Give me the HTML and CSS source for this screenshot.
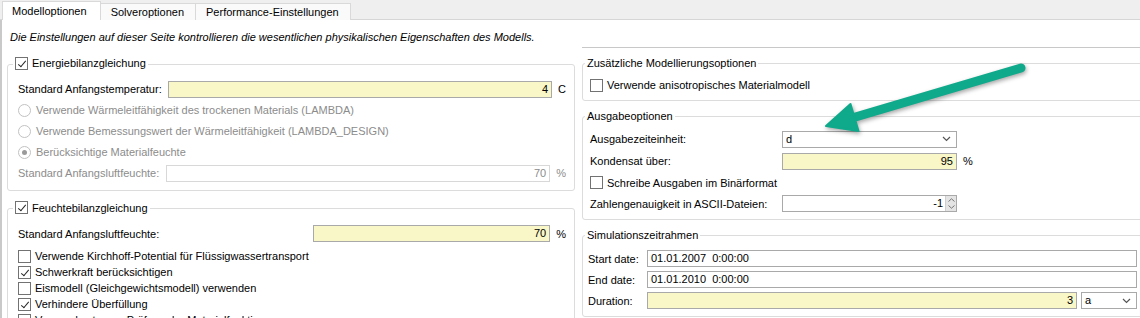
FILE: index.html
```html
<!DOCTYPE html>
<html lang="de">
<head>
    <meta charset="UTF-8">
    <title>Modelloptionen</title>
    <link rel="stylesheet" href="styles.css">
</head>
<body>
    <div class="window">
        <div class="tabbar">
            <div class="tab active">Modelloptionen</div>
            <div class="tab">Solveroptionen</div>
            <div class="tab">Performance-Einstellungen</div>
        </div>

        <div class="page">
            <p class="intro">Die Einstellungen auf dieser Seite kontrollieren die wesentlichen physikalischen Eigenschaften des Modells.</p>

            <div class="columns">
                <!-- linke Spalte -->
                <div class="col-left">
                    <fieldset class="group group-energy">
                        <legend><span class="legend-inner"><span class="check on"></span>Energiebilanzgleichung</span></legend>
                        <div class="row">
                            <span class="label">Standard Anfangstemperatur:</span>
                            <span class="field num yellow w-temp">4</span>
                            <span class="unit">C</span>
                        </div>
                        <div class="row disabled"><span class="radio"></span>Verwende Wärmeleitfähigkeit des trockenen Materials (LAMBDA)</div>
                        <div class="row disabled"><span class="radio"></span>Verwende Bemessungswert der Wärmeleitfähigkeit (LAMBDA_DESIGN)</div>
                        <div class="row disabled"><span class="radio on"></span>Berücksichtige Materialfeuchte</div>
                        <div class="row disabled">
                            <span class="label">Standard Anfangsluftfeuchte:</span>
                            <span class="field num off w-temp">70</span>
                            <span class="unit">%</span>
                        </div>
                    </fieldset>

                    <fieldset class="group group-moist">
                        <legend><span class="legend-inner"><span class="check on"></span>Feuchtebilanzgleichung</span></legend>
                        <div class="row">
                            <span class="label">Standard Anfangsluftfeuchte:</span>
                            <span class="field num yellow w-moist">70</span>
                            <span class="unit">%</span>
                        </div>
                        <div class="checks">
                            <div class="check-row"><span class="check"></span>Verwende Kirchhoff-Potential für Flüssigwassertransport</div>
                            <div class="check-row"><span class="check on"></span>Schwerkraft berücksichtigen</div>
                            <div class="check-row"><span class="check"></span>Eismodell (Gleichgewichtsmodell) verwenden</div>
                            <div class="check-row"><span class="check on"></span>Verhindere Überfüllung</div>
                            <div class="check-row"><span class="check"></span>Verwende strenge Prüfung der Materialfunktionen</div>
                        </div>
                    </fieldset>
                </div>

                <!-- rechte Spalte -->
                <div class="col-right">
                    <fieldset class="group group-extra">
                        <legend>Zusätzliche Modellierungsoptionen</legend>
                        <div class="row row-20"><span class="check"></span>Verwende anisotropisches Materialmodell</div>
                    </fieldset>

                    <fieldset class="group group-output">
                        <legend>Ausgabeoptionen</legend>
                        <div class="row row-22">
                            <span class="label out-label">Ausgabezeiteinheit:</span>
                            <span class="field combo w-out">d<svg class="chevron" width="9" height="6" viewBox="0 0 9 6"><polyline points="1,1 4.5,4.5 8,1" /></svg></span>
                        </div>
                        <div class="row row-22">
                            <span class="label out-label">Kondensat über:</span>
                            <span class="field num yellow w-out">95</span>
                            <span class="unit">%</span>
                        </div>
                        <div class="row"><span class="check"></span>Schreibe Ausgaben im Binärformat</div>
                        <div class="row">
                            <span class="label out-label">Zahlengenauigkeit in ASCII-Dateien:</span>
                            <span class="field spinbox w-out">
                                <span class="spin-value">-1</span>
                                <span class="spin">
                                    <svg width="7" height="4" viewBox="0 0 7 4"><polyline points="0.5,3.5 3.5,0.8 6.5,3.5" /></svg>
                                    <svg width="7" height="4" viewBox="0 0 7 4"><polyline points="0.5,0.5 3.5,3.2 6.5,0.5" /></svg>
                                </span>
                            </span>
                        </div>
                    </fieldset>

                    <fieldset class="group group-sim">
                        <legend>Simulationszeitrahmen</legend>
                        <div class="row">
                            <span class="label sim-label">Start date:</span>
                            <span class="field grow">01.01.2007&nbsp; 0:00:00</span>
                        </div>
                        <div class="row">
                            <span class="label sim-label">End date:</span>
                            <span class="field grow">01.01.2010&nbsp; 0:00:00</span>
                        </div>
                        <div class="row">
                            <span class="label sim-label">Duration:</span>
                            <span class="field num yellow grow">3</span>
                            <span class="field combo w-unit">a<svg class="chevron" width="9" height="6" viewBox="0 0 9 6"><polyline points="1,1 4.5,4.5 8,1" /></svg></span>
                        </div>
                    </fieldset>
                </div>
            </div>
        </div>

        <!-- Hinweispfeil -->
        <svg class="arrow" width="1140" height="318" viewBox="0 0 1140 318">
            <line x1="1021" y1="68" x2="852" y2="118" />
            <polygon points="826,126 850.5,104 858.5,131" />
        </svg>
    </div>
</body>
</html>
```

FILE: styles.css
```css
* {
    margin: 0;
    padding: 0;
    box-sizing: border-box;
}

html, body {
    width: 1140px;
    height: 318px;
    overflow: hidden;
    background-color: #ffffff;
}

body {
    font-family: "Liberation Sans", Arial, sans-serif;
    font-size: 11px;
    color: #000000;
}

.window {
    position: relative;
    width: 1140px;
    height: 318px;
    overflow: hidden;
}

/* Reiterleiste */
.tabbar {
    height: 20px;
    display: flex;
    align-items: flex-end;
    padding-left: 3px;
    background-color: #efefef;
    border-bottom: 1px solid #d6d6d6;
}

.tab {
    height: 17px;
    line-height: 16px;
    padding: 0 11px 0 10px;
    background-color: #fafafa;
    border: 1px solid #d9d9d9;
    border-bottom: none;
    margin-bottom: -1px;
    margin-left: -1px;
}

.tab.active {
    height: 19px;
    line-height: 18px;
    padding: 0 13px 0 9px;
    background-color: #ffffff;
    position: relative;
    z-index: 1;
}

.page {
    border-left: 2px solid #c9c9c9;
    height: 298px;
}

.intro {
    font-style: italic;
    line-height: 14px;
    padding: 10px 0 0 8px;
}

.columns {
    display: grid;
    grid-template-columns: 568px 562px;
    column-gap: 7px;
    padding-left: 5px;
    margin-top: 3px;
}

/* Gruppenrahmen */
.group {
    border: 1px solid #dcdcdc;
    border-radius: 3px;
    min-width: 0;
}

.group legend {
    line-height: 14px;
    padding: 0 2px;
    margin-left: -5px;
}

.legend-inner {
    display: inline-flex;
    align-items: center;
}

.legend-inner .check {
    margin-right: 4px;
}

.group-energy {
    margin-top: 9px;
    padding: 6px 8px 6px 10px;
}

.group-moist {
    margin-top: 10px;
    padding: 6px 8px 10px 10px;
}

.col-right {
    border-top: 1px solid #c8c8c8;
    padding-top: 8px;
}

.col-right .group {
    padding: 5px 6px 5px 7px;
}

.col-right .group + .group {
    margin-top: 8px;
}

.col-right .group-sim {
    padding: 6px 6px 5px 5px;
}

.col-right .group-sim legend {
    margin-left: -3px;
}

/* Zeilen */
.row {
    display: flex;
    align-items: center;
    height: 21px;
    white-space: nowrap;
}

.row-20 {
    height: 20px;
}

.row-22 {
    height: 22px;
}

.row .check {
    margin-right: 4px;
}

.disabled {
    color: #8c8c8c;
}

.checks {
    margin-top: 4px;
}

.check-row {
    display: flex;
    align-items: center;
    height: 16px;
    white-space: nowrap;
}

.check-row .check {
    margin-right: 4px;
}

.out-label {
    width: 192px;
    flex: none;
}

.sim-label {
    width: 59px;
    flex: none;
}

.unit {
    margin-left: 6px;
}

/* Eingabefelder */
.field {
    display: flex;
    align-items: center;
    height: 17px;
    border: 1px solid #a9a9a9;
    background-color: #ffffff;
    padding: 0 3px;
    line-height: 15px;
    white-space: nowrap;
}

.field.num {
    justify-content: flex-end;
}

.field.yellow {
    background-color: #f9f6c7;
}

.field.off {
    border-color: #d8d8d8;
    color: #8c8c8c;
}

.w-temp {
    width: 384px;
    margin-left: auto;
}

.w-moist {
    width: 237px;
    margin-left: auto;
}

.w-out {
    width: 175px;
    flex: none;
}

.w-unit {
    width: 56px;
    flex: none;
    margin-left: 4px;
}

.grow {
    flex: 1;
}

.combo {
    justify-content: space-between;
    padding-right: 5px;
}

.chevron polyline {
    fill: none;
    stroke: #555555;
    stroke-width: 1.2;
}

.spinbox {
    padding: 0 0 0 3px;
}

.spin-value {
    flex: 1;
    text-align: right;
    padding-right: 2px;
}

.spin {
    width: 11px;
    height: 15px;
    background-color: #e4e4e4;
    border-left: 1px solid #cfcfcf;
    display: flex;
    flex-direction: column;
    align-items: center;
    justify-content: space-evenly;
}

.spin polyline {
    fill: none;
    stroke: #777777;
    stroke-width: 1;
}

/* Kontrollkästchen und Optionsfelder */
.check {
    display: inline-block;
    flex: none;
    width: 13px;
    height: 13px;
    border: 1px solid #727272;
    background-color: #ffffff;
    position: relative;
}

.check.on::after {
    content: "";
    position: absolute;
    left: 3.5px;
    top: 1px;
    width: 3px;
    height: 7px;
    border-right: 1.4px solid #262626;
    border-bottom: 1.4px solid #262626;
    transform: rotate(40deg);
}

.radio {
    display: inline-block;
    flex: none;
    width: 13px;
    height: 13px;
    border: 1px solid #c2c2c2;
    border-radius: 50%;
    background-color: #ffffff;
    margin-right: 5px;
    position: relative;
}

.radio.on::after {
    content: "";
    position: absolute;
    left: 3px;
    top: 3px;
    width: 5px;
    height: 5px;
    border-radius: 50%;
    background-color: #9a9a9a;
}

/* Pfeil */
.arrow {
    position: absolute;
    left: 0;
    top: 0;
    pointer-events: none;
    filter: drop-shadow(1px 2px 2px rgba(0, 0, 0, 0.35));
}

.arrow line {
    stroke: #0fa98b;
    stroke-width: 9;
    stroke-linecap: round;
}

.arrow polygon {
    fill: #0fa98b;
    stroke: #0fa98b;
    stroke-width: 2;
    stroke-linejoin: round;
}
```
